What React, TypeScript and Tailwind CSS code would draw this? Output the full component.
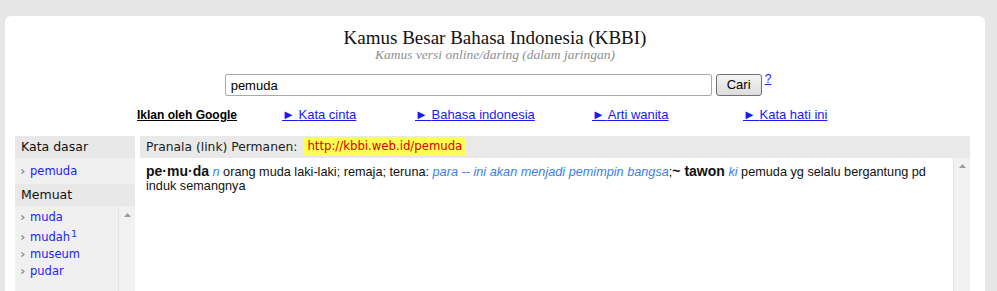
import React from "react";

const sans = { fontFamily: '"Liberation Sans", Arial, sans-serif' };
const verd = { fontFamily: '"DejaVu Sans", Verdana, sans-serif' };
const serif = { fontFamily: '"Liberation Serif", Georgia, serif' };

const iklan = ["Kata cinta", "Bahasa indonesia", "Arti wanita", "Kata hati ini"];
const memuat: { w: string; sup?: string }[] = [{ w: "muda" }, { w: "mudah", sup: "1" }, { w: "museum" }, { w: "pudar" }];

function Bullet() {
  return <svg width="4" height="5" viewBox="0 0 4 5" className="mr-[5px] shrink-0"><polyline points="0.5,0.5 3,2.5 0.5,4.5" fill="none" stroke="#8a8a8a" strokeWidth="1.2"/></svg>;
}

function ScrollUp() {
  return <svg width="7" height="4" viewBox="0 0 7 4"><polygon points="0,4 3.5,0 7,4" fill="#9c9c9c"/></svg>;
}

function Scrollbar({ pt }: { pt: string }) {
  return <div className={`flex w-[17px] shrink-0 justify-center border-l border-[#e4e4e4] bg-[#f1f1f1] ${pt}`}><ScrollUp/></div>;
}

export default function App() {
  return <div className="h-[291px] overflow-hidden bg-[#e7e7e7] pl-[5px] pr-3 pt-4">
    <div className="h-[400px] rounded-t-md bg-white pt-3">
      <h1 className="text-center text-[19px] leading-[20px] text-[#111]" style={serif}>Kamus Besar Bahasa Indonesia (KBBI)</h1>
      <p className="text-center text-[13.5px] italic leading-[14px] text-[#8e8e8e]" style={serif}>Kamus versi online/daring (dalam jaringan)</p>

      <form className="mt-3 flex items-start justify-center pl-[6px]" style={sans} onSubmit={e => e.preventDefault()}>
        <input defaultValue="pemuda" className="h-[22px] w-[487px] rounded-[2px] border border-[#a9a9a9] px-[5px] text-[13px] text-black outline-none"/>
        <button className="ml-1 h-[22px] w-[46px] rounded-[3px] border border-[#707070] bg-gradient-to-b from-[#f4f4f4] to-[#dcdcdc] text-[13px] text-black">Cari</button>
        <a href="#" className="ml-[3px] -mt-[2px] text-[12px] leading-[14px] text-[#1a1aee] underline">?</a>
      </form>

      <div className="ml-[132px] mt-[11px] grid grid-cols-[145px_133px_177px_151px_auto] text-[13px] leading-4" style={sans}>
        <a href="#" className="text-[12px] font-bold text-black underline">Iklan oleh Google</a>
        {iklan.map(t => <div key={t}><a href="#" className="text-[#1a1aee] underline">► {t}</a></div>)}
      </div>

      <div className="ml-[10px] mr-[15px] mt-[13px] flex gap-[5px]">
        <aside className="flex h-[200px] w-[120px] shrink-0 flex-col bg-[#f0f0f0]" style={verd}>
          <div className="flex h-[22px] items-center bg-[#e8e8e8] px-[6px] text-[12.5px] text-[#111]">Kata dasar</div>
          <div className="flex h-[26px] items-center px-[6px] text-[11.5px] leading-4">
            <Bullet/><a href="#" className="text-[#2222f0]">pemuda</a>
          </div>
          <div className="flex h-[22px] items-center bg-[#e8e8e8] px-[6px] text-[12.5px] text-[#111]">Memuat</div>
          <div className="flex flex-1">
            <ul className="flex-1 px-[6px] pt-[3px] text-[11.5px] leading-[17px]">
              {memuat.map(m => <li key={m.w} className={`flex items-center ${m.sup ? "pt-[3px]" : ""}`}>
                <Bullet/><a href="#" className="text-[#2222f0]">{m.w}{m.sup && <sup className="ml-px text-[9px]">{m.sup}</sup>}</a>
              </li>)}
            </ul>
            <Scrollbar pt="pt-[7px]"/>
          </div>
        </aside>

        <main className="flex h-[200px] flex-1 flex-col">
          <div className="flex h-[22px] items-center bg-[#e9e9e9] pl-[6px] text-[12.3px] text-[#222]" style={verd}>
            Pranala (link) Permanen:
            <span className="ml-[6px] flex h-[18px] items-center bg-[#ffff55] px-1 text-[11.7px] text-[#d40000]">http://kbbi.web.id/pemuda</span>
          </div>
          <div className="flex flex-1">
            <div className="flex-1 pl-[6px] pr-[20px] pt-[6px] text-[12.7px] leading-[14px] text-[#111]" style={sans}>
              <b className="text-[14px]">pe·mu·da</b> <i className="text-[#3d80e6]">n</i> orang muda laki-laki; remaja; teruna: <i className="text-[#3d80e6]">para -- ini akan menjadi pemimpin bangsa</i>;<b className="text-[14px]">~ tawon</b> <i className="text-[#3d80e6]">ki</i> pemuda yg selalu bergantung pd induk semangnya
            </div>
            <Scrollbar pt="pt-[6px]"/>
          </div>
        </main>
      </div>
    </div>
  </div>;
}
